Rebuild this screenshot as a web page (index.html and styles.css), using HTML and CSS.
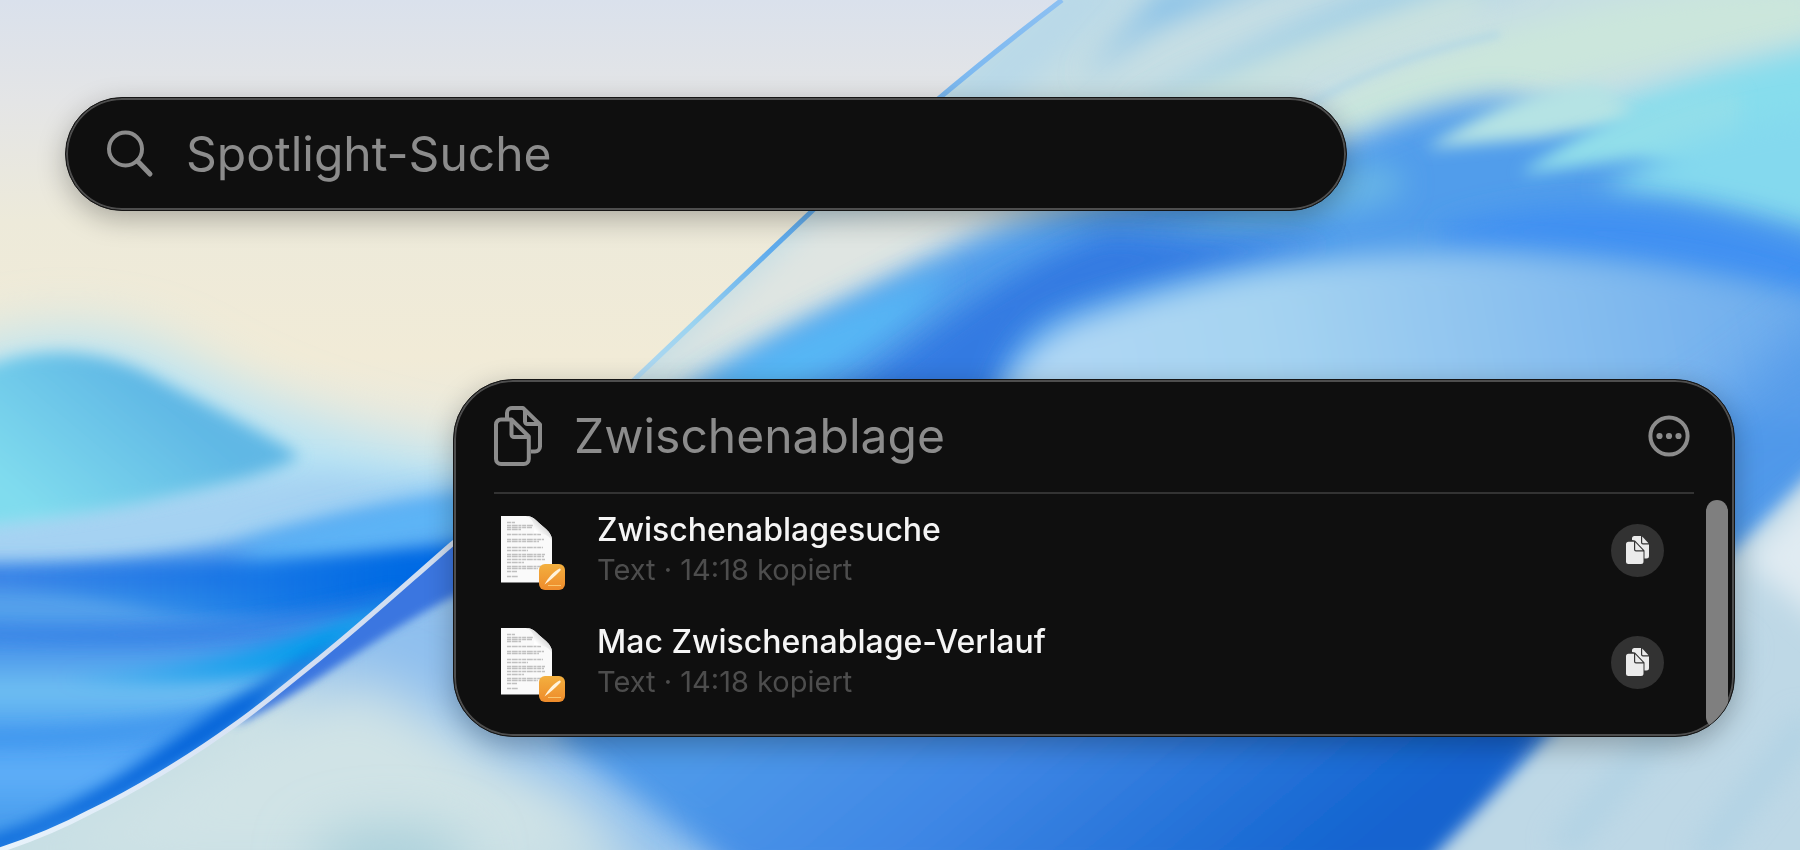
FILE: index.html
```html
<!DOCTYPE html>
<html lang="de">
<head>
  <meta charset="UTF-8" />
  <meta name="viewport" content="width=device-width, initial-scale=1.0"/>
  <title>Spotlight</title>
  <link rel="stylesheet" href="styles.css">
</head>
<body>

  <!-- Wallpaper -->
  <svg class="wallpaper" viewBox="0 0 1800 850" preserveAspectRatio="xMidYMid slice" aria-hidden="true">
    <defs>
      <linearGradient id="sky" x1="0" y1="0" x2="0" y2="1">
        <stop offset="0" stop-color="#dae1ec"/>
        <stop offset="0.12" stop-color="#e4e5e6"/>
        <stop offset="0.26" stop-color="#edeada"/>
        <stop offset="0.42" stop-color="#f1ebd7"/>
        <stop offset="0.55" stop-color="#e8e9e0"/>
      </linearGradient>
      <linearGradient id="hill" gradientUnits="userSpaceOnUse" x1="20" y1="500" x2="130" y2="370">
        <stop offset="0" stop-color="#80dcee"/>
        <stop offset="1" stop-color="#60b8e5"/>
      </linearGradient>
      <linearGradient id="sea" gradientUnits="userSpaceOnUse" x1="0" y1="545" x2="0" y2="850">
        <stop offset="0" stop-color="#58a4ee"/>
        <stop offset="0.1" stop-color="#3c82e6"/>
        <stop offset="0.2" stop-color="#58a6ec"/>
        <stop offset="0.3" stop-color="#3f8ae8"/>
        <stop offset="0.48" stop-color="#6fbff2"/>
        <stop offset="0.62" stop-color="#4a9ef1"/>
        <stop offset="0.75" stop-color="#5eaef8"/>
        <stop offset="1" stop-color="#3c94e8"/>
      </linearGradient>
      <linearGradient id="deep" gradientUnits="userSpaceOnUse" x1="0" y1="0" x2="400" y2="0">
        <stop offset="0" stop-color="#066be4" stop-opacity="0.1"/>
        <stop offset="1" stop-color="#066be4"/>
      </linearGradient>
      <linearGradient id="glow" gradientUnits="userSpaceOnUse" x1="60" y1="0" x2="330" y2="0">
        <stop offset="0" stop-color="#06a0ec" stop-opacity="0"/>
        <stop offset="1" stop-color="#06a0ec"/>
      </linearGradient>
      <linearGradient id="floor" gradientUnits="userSpaceOnUse" x1="860" y1="620" x2="1180" y2="1000">
        <stop offset="0" stop-color="#4e99e9"/>
        <stop offset="0.4" stop-color="#3f87e5"/>
        <stop offset="1" stop-color="#1263cf"/>
      </linearGradient>
      <linearGradient id="lens" gradientUnits="userSpaceOnUse" x1="1000" y1="400" x2="1800" y2="260">
        <stop offset="0" stop-color="#b2d8f5"/>
        <stop offset="0.35" stop-color="#a5d3f1"/>
        <stop offset="1" stop-color="#6cabed"/>
      </linearGradient>
      <linearGradient id="rim" gradientUnits="userSpaceOnUse" x1="1060" y1="0" x2="0" y2="850">
        <stop offset="0" stop-color="#8cc0f2"/>
        <stop offset="0.28" stop-color="#5fabec"/>
        <stop offset="0.36" stop-color="#9bd3f0"/>
        <stop offset="0.5" stop-color="#cfdff0"/>
        <stop offset="0.75" stop-color="#d3def2"/>
        <stop offset="1" stop-color="#e8f3fb"/>
      </linearGradient>
      <clipPath id="left-side">
        <path d="M0 0H1062C980 62 880 146 812 211L635 379C570 440 515 495 452 544C405 585 360 626 320 658C290 682 262 706 233 726C186 760 130 793 90 812C60 828 30 840 0 850Z"/>
      </clipPath>
      <clipPath id="right-side">
        <path d="M1800 0H1062C980 62 880 146 812 211L635 379C570 440 515 495 452 544C405 585 360 626 320 658C290 682 262 706 233 726C186 760 130 793 90 812C60 828 30 840 0 850H1800Z"/>
      </clipPath>
      <filter id="b4" filterUnits="userSpaceOnUse" x="-100" y="-100" width="2000" height="1050"><feGaussianBlur stdDeviation="4"/></filter>
      <filter id="b8" filterUnits="userSpaceOnUse" x="-100" y="-100" width="2000" height="1050"><feGaussianBlur stdDeviation="8"/></filter>
      <filter id="b14" filterUnits="userSpaceOnUse" x="-100" y="-100" width="2000" height="1050"><feGaussianBlur stdDeviation="14"/></filter>
      <filter id="b28" filterUnits="userSpaceOnUse" x="-100" y="-100" width="2000" height="1050"><feGaussianBlur stdDeviation="28"/></filter>
    </defs>

    <g clip-path="url(#left-side)">
      <rect width="1800" height="850" fill="url(#sky)"/>
      <path d="M-60 360C30 325 120 320 200 370C280 415 360 440 500 465V640H-60Z" fill="#b5e3f5" filter="url(#b28)"/>
      <path d="M-60 525C120 505 260 470 330 472C390 478 440 485 520 475V620H-60Z" fill="#a5d2f2" filter="url(#b14)"/>
      <path d="M-40 380C20 345 90 345 150 375C200 402 260 430 300 456C270 476 200 489 150 501C90 514 40 520 -40 528Z" fill="url(#hill)" filter="url(#b8)"/>
      <path d="M-40 562C100 565 180 552 260 535C340 515 400 500 540 490V900H-40Z" fill="url(#sea)" filter="url(#b8)"/>
      <path d="M250 545C340 518 400 500 500 488V530C400 545 330 560 240 568Z" fill="#5db6f7" filter="url(#b14)"/>
      <path d="M-20 565C150 568 330 562 500 538V590C380 620 260 625 160 612C100 600 40 590 -20 586Z" fill="url(#deep)" filter="url(#b8)"/>
      <path d="M-20 628C120 636 240 626 400 590V602C280 640 130 646 -20 636Z" fill="#2f7ee4" opacity="0.7" filter="url(#b8)"/>
      <path d="M60 672C200 668 310 640 400 600L310 662C240 682 160 688 60 684Z" fill="url(#glow)" filter="url(#b8)"/>
      <path d="M-20 738C80 740 180 728 260 700" fill="none" stroke="#3f97ee" stroke-width="14" filter="url(#b8)"/>
      <path d="M340 640L240 722C190 757 130 793 90 812L0 850H-20V842C80 812 150 755 215 712C250 690 300 660 340 640Z" fill="#0560d8" filter="url(#b8)"/>
    </g>

    <g clip-path="url(#right-side)">
      <rect width="1800" height="850" fill="#c6dee4"/>
      <!-- streaks, top right -->
      <path d="M1060 -20L1150 -20L900 200L800 240Z" fill="#b9d9e8" filter="url(#b14)"/>
      <path d="M820 215L1040 200L860 290L640 385Z" fill="#dfe5e2" filter="url(#b14)"/>
      <path d="M1150 30C1230 -5 1280 -20 1330 -30L1290 -30L1160 -10L1080 80Z" fill="#85c0e8" filter="url(#b14)"/>
      <path d="M1400 -20C1310 10 1240 50 1130 110L1230 90C1330 30 1440 0 1540 -20Z" fill="#a1cfe6" filter="url(#b14)"/>
      <path d="M1150 120C1290 60 1370 40 1480 0" fill="none" stroke="#cde4dd" stroke-width="24" filter="url(#b14)"/>
      <path d="M1330 100C1440 40 1600 -10 1820 -20V40C1650 60 1500 100 1340 140Z" fill="#cbe6dc" filter="url(#b14)"/>
      <path d="M1310 104C1370 70 1420 52 1500 34" fill="none" stroke="#9ccdea" stroke-width="5" opacity="0.6" filter="url(#b4)"/>
      <path d="M1480 150C1590 110 1700 70 1840 40V260H1480Z" fill="#87dded" filter="url(#b14)"/>
      <!-- blue ribbon -->
      <path d="M640 425C740 355 860 295 960 245C1080 190 1240 190 1330 150C1390 122 1440 102 1500 98C1600 110 1700 165 1840 205V560H640Z" fill="#519deb" filter="url(#b14)"/>
      <path d="M1425 148C1470 122 1520 88 1600 84L1640 120L1540 138Z" fill="#b5e3e4" filter="url(#b8)"/>
      <path d="M1520 174C1570 140 1630 100 1740 92V170L1640 158Z" fill="#92deea" filter="url(#b8)"/>
      <path d="M1600 190C1660 150 1720 120 1860 110V240C1790 225 1700 196 1600 190Z" fill="#84d9ee" filter="url(#b14)"/>
      <path d="M1330 170C1400 150 1440 190 1360 210L1160 240Z" fill="#66b3e6" filter="url(#b14)"/>
      <path d="M1440 230C1560 190 1700 200 1840 260V310C1700 270 1560 250 1440 250Z" fill="#3f90f2" filter="url(#b14)"/>
      <path d="M690 395C780 335 860 305 950 270C920 325 850 365 760 405Z" fill="#56b7f5" filter="url(#b14)"/>
      <path d="M820 410C930 340 1000 265 1110 232C1180 240 1260 244 1340 244C1200 268 1090 292 1040 320C1000 350 1000 380 990 410Z" fill="#2f74e0" opacity="0.85" filter="url(#b14)"/>
      <path d="M990 420C1010 365 1040 332 1090 316C1200 279 1300 254 1450 252C1600 254 1750 276 1840 306V420Z" fill="url(#lens)" filter="url(#b14)"/>
      <path d="M1640 440C1740 400 1780 340 1860 300V470L1700 580H1640Z" fill="#4f97e9" opacity="0.75" filter="url(#b28)"/>
      <!-- lower half -->
      <path d="M300 600C500 520 560 600 760 680L1760 600L1420 880H640C560 800 440 760 300 760Z" fill="#8fbfee" filter="url(#b28)"/>
      <path d="M560 700C700 650 1200 600 1600 660L1450 880H740C690 830 610 780 560 740Z" fill="url(#floor)" filter="url(#b14)"/>
      <path d="M1440 850L1860 425V900H1400Z" fill="#bed8e6" filter="url(#b8)"/>
      <path d="M1745 560L1840 460V640Z" fill="#e0ebf2" filter="url(#b14)"/>
      <path d="M1560 850L1740 640M1700 860L1810 720" stroke="#a9cfe3" stroke-width="28" opacity="0.6" filter="url(#b14)"/>
      <path d="M0 860C200 800 250 690 360 680C440 700 480 770 560 790L640 860Z" fill="#d0e3e6" filter="url(#b28)"/>
      <ellipse cx="390" cy="860" rx="80" ry="30" fill="#a6ced9" filter="url(#b28)"/>
      <path d="M490 500L233 726C300 700 390 620 490 580Z" fill="#3b76e0" filter="url(#b4)"/>
    </g>

    <path d="M1062 0C980 62 880 146 812 211L635 379" fill="none" stroke="url(#rim)" stroke-width="5"/>
    <path d="M635 379C570 440 515 495 452 544C405 585 360 626 320 658C290 682 262 706 233 726C186 760 130 793 90 812C60 828 30 840 0 850" fill="none" stroke="url(#rim)" stroke-width="5"/>
  </svg>

  <main class="desktop">

    <form class="glass search-bar">
      <svg class="search-icon" viewBox="0 0 48 48" fill="none" stroke="currentColor" stroke-linecap="round" aria-hidden="true">
        <circle cx="19.500" cy="19" r="16.500" stroke-width="4"/>
        <path d="M31.500 31L44 44" stroke-width="5"/>
      </svg>
      <input class="search-input" type="text" placeholder="Spotlight-Suche" aria-label="Spotlight-Suche">
    </form>

    <section class="glass panel">
      <div class="panel-header">
        <svg class="clipboard-icon" viewBox="0 0 48 60" fill="none" stroke="currentColor" stroke-width="4" stroke-linejoin="round" aria-hidden="true">
          <path d="M13 12V7a5 5 0 0 1 5-5H29L46 18.500V40.500a5 5 0 0 1-5 5H37"/>
          <path d="M31 3V15.500a2.500 2.500 0 0 0 2.500 2.500H45"/>
          <path d="M7 13.500H17.500L34.800 30.500V53a5 5 0 0 1-5 5H7a5 5 0 0 1-5-5V18.500a5 5 0 0 1 5-5Z"/>
          <path d="M17.500 15V28.500a2.500 2.500 0 0 0 2.500 2.500H34"/>
        </svg>
        <input class="search-input" type="text" placeholder="Zwischenablage" aria-label="Zwischenablage">
        <button class="more-button" type="button" aria-label="Mehr">
          <svg viewBox="0 0 42 42" aria-hidden="true">
            <circle cx="21" cy="21" r="18.600" fill="none" stroke="currentColor" stroke-width="4"/>
            <circle cx="11.500" cy="21" r="3.100" fill="currentColor"/>
            <circle cx="21" cy="21" r="3.100" fill="currentColor"/>
            <circle cx="30.500" cy="21" r="3.100" fill="currentColor"/>
          </svg>
        </button>
      </div>

      <div class="panel-body">
        <ul class="clips">
          <li class="clip">
            <svg class="doc-icon" viewBox="0 0 64 80" aria-hidden="true">
              <defs>
                <linearGradient id="curl" x1="0" y1="1" x2="1" y2="0">
                  <stop offset="0.4" stop-color="#ffffff"/>
                  <stop offset="0.65" stop-color="#d8d8d8"/>
                  <stop offset="1" stop-color="#f6f6f6"/>
                </linearGradient>
                <linearGradient id="orange" x1="0" y1="0" x2="0" y2="1">
                  <stop offset="0" stop-color="#f3b03f"/>
                  <stop offset="1" stop-color="#ee8b2b"/>
                </linearGradient>
              </defs>
              <g id="document">
                <path d="M0 6H25C31 6 34 9 38 13L45 19C49 23 51 26 51 31V72.500H0Z" fill="#fafafa"/>
                <path d="M6 12.500H14M6 15.500H32M6 17.500H31M6 19.500H20M6 24.500H40M6 29.500H43M6 31.500H38M6 37.500H42M6 40.500H27M6 44.500H44M6 46.500H43M6 49.500H44M6 52.500H23M6 56.500H40M6 58.500H37M6 61.500H16M6 66.500H17" stroke="#888888" stroke-width="1.300" stroke-dasharray="4 0.700 6 0.700 3 0.700" opacity="0.5"/>
                <path d="M25 6C31 6 34 9 38 13L45 19C49 23 51 26 51 31C47 24 41 23 33 23C34 15 32 8 25 6Z" fill="url(#curl)"/>
                <rect x="38" y="54" width="26" height="26" rx="6" fill="url(#orange)"/>
                <path d="M43.500 74.500C47 68 53 61 58.500 58.500C60 58.500 60 60 59 61C54 66 49 71 43.500 74.500Z" fill="#fff3dc"/>
                <path d="M47 75.500H60" stroke="#f9c76f" stroke-width="1.200"/>
              </g>
            </svg>
            <div class="clip-text">
              <div class="clip-title">Zwischenablagesuche</div>
              <div class="clip-meta">Text · 14:18 kopiert</div>
            </div>
            <button class="copy-button" type="button" aria-label="Kopieren">
              <svg viewBox="0 0 24 28" aria-hidden="true">
                <g id="copy-glyph">
                  <path d="M6 4V2.500A2.500 2.500 0 0 1 8.500 0H15V6.500A2 2 0 0 0 17 8.500H23V20A2.500 2.500 0 0 1 20.500 22.500H18.500V14.500L9 4.500Z" fill="#ebebeb"/>
                  <path d="M16.200 0.500L22.500 7.300H17A0.800 0.800 0 0 1 16.200 6.500Z" fill="#ebebeb"/>
                  <path d="M2.500 5.700H8V13.500A2 2 0 0 0 10 15.500H17.500V25.500A2.500 2.500 0 0 1 15 28H2.500A2.500 2.500 0 0 1 0 25.500V8.200A2.500 2.500 0 0 1 2.500 5.700Z" fill="#ebebeb"/>
                  <path d="M9.200 6.200L16.800 14.300H10A0.800 0.800 0 0 1 9.200 13.500Z" fill="#ebebeb"/>
                </g>
              </svg>
            </button>
          </li>
          <li class="clip">
            <svg class="doc-icon" viewBox="0 0 64 80" aria-hidden="true"><use href="#document"/></svg>
            <div class="clip-text">
              <div class="clip-title">Mac Zwischenablage-Verlauf</div>
              <div class="clip-meta">Text · 14:18 kopiert</div>
            </div>
            <button class="copy-button" type="button" aria-label="Kopieren">
              <svg viewBox="0 0 24 28" aria-hidden="true"><use href="#copy-glyph"/></svg>
            </button>
          </li>
        </ul>
        <div class="scroll-thumb"></div>
      </div>
    </section>

  </main>

</body>
</html>
```

FILE: styles.css
```css
* {
  box-sizing: border-box;
}

body {
  margin: 0;
  min-height: 100vh;
  font-family: Inter, "Liberation Sans", sans-serif;
  background: #c6dee4;
  color: #fff;
}

.wallpaper {
  position: fixed;
  inset: 0;
  width: 100%;
  height: 100%;
  z-index: -1;
}

.desktop {
  display: flex;
  flex-direction: column;
  gap: 168px;
  padding: 97px 65px;
}

.glass {
  width: calc(100% - 388px);
  background: #0f0f0f;
  border: 1px solid #151515;
  box-shadow: inset 0 0 0 2px #4e4e4e, 0 8px 28px rgba(0, 0, 0, 0.28);
  overflow: hidden;
}

/* Search bar */

.search-bar {
  display: flex;
  align-items: center;
  gap: 32px;
  height: 114px;
  padding: 0 40px;
  border-radius: 57px;
  color: #8c8c8c;
}

.search-icon {
  width: 48px;
  height: 48px;
  flex-shrink: 0;
}

.search-input {
  flex: 1;
  min-width: 0;
  padding: 0;
  border: none;
  outline: none;
  background: none;
  color: #fff;
  font-family: inherit;
  font-size: 48px;
  line-height: 64px;
}

.search-input::placeholder {
  color: #8c8c8c;
  opacity: 1;
}

/* Clipboard panel */

.panel {
  align-self: flex-end;
  border-radius: 60px;
}

.panel-header {
  display: flex;
  align-items: center;
  gap: 32px;
  height: 114px;
  margin: 0 40px;
  padding-right: 4px;
  border-bottom: 2px solid #333;
  color: #8c8c8c;
}

.clipboard-icon {
  width: 48px;
  height: 60px;
  flex-shrink: 0;
}

button {
  border: none;
  padding: 0;
  cursor: pointer;
}

.more-button {
  width: 42px;
  height: 42px;
  background: none;
  color: #8c8c8c;
}

.more-button svg {
  display: block;
}

.panel-body {
  display: flex;
  gap: 42px;
  padding: 0 6px 0 47px;
}

.clips {
  flex: 1;
  min-width: 0;
  margin: 0;
  padding: 0 0 18px;
  list-style: none;
}

.clip {
  display: flex;
  align-items: center;
  gap: 32px;
  height: 112px;
}

.doc-icon {
  width: 64px;
  height: 80px;
  flex-shrink: 0;
}

.clip-text {
  flex: 1;
  min-width: 0;
  line-height: 40px;
}

.clip-title {
  font-size: 32px;
  font-weight: 500;
  color: #f5f5f5;
}

.clip-meta {
  font-size: 29px;
  color: #4d4d4d;
}

.copy-button {
  display: flex;
  align-items: center;
  justify-content: center;
  width: 53px;
  height: 53px;
  border-radius: 50%;
  background: #323232;
}

.copy-button svg {
  width: 24px;
  height: 28px;
}

.scroll-thumb {
  width: 22px;
  margin: 6px 0 8px;
  border-radius: 11px;
  background: #7f7f7f;
}
```
